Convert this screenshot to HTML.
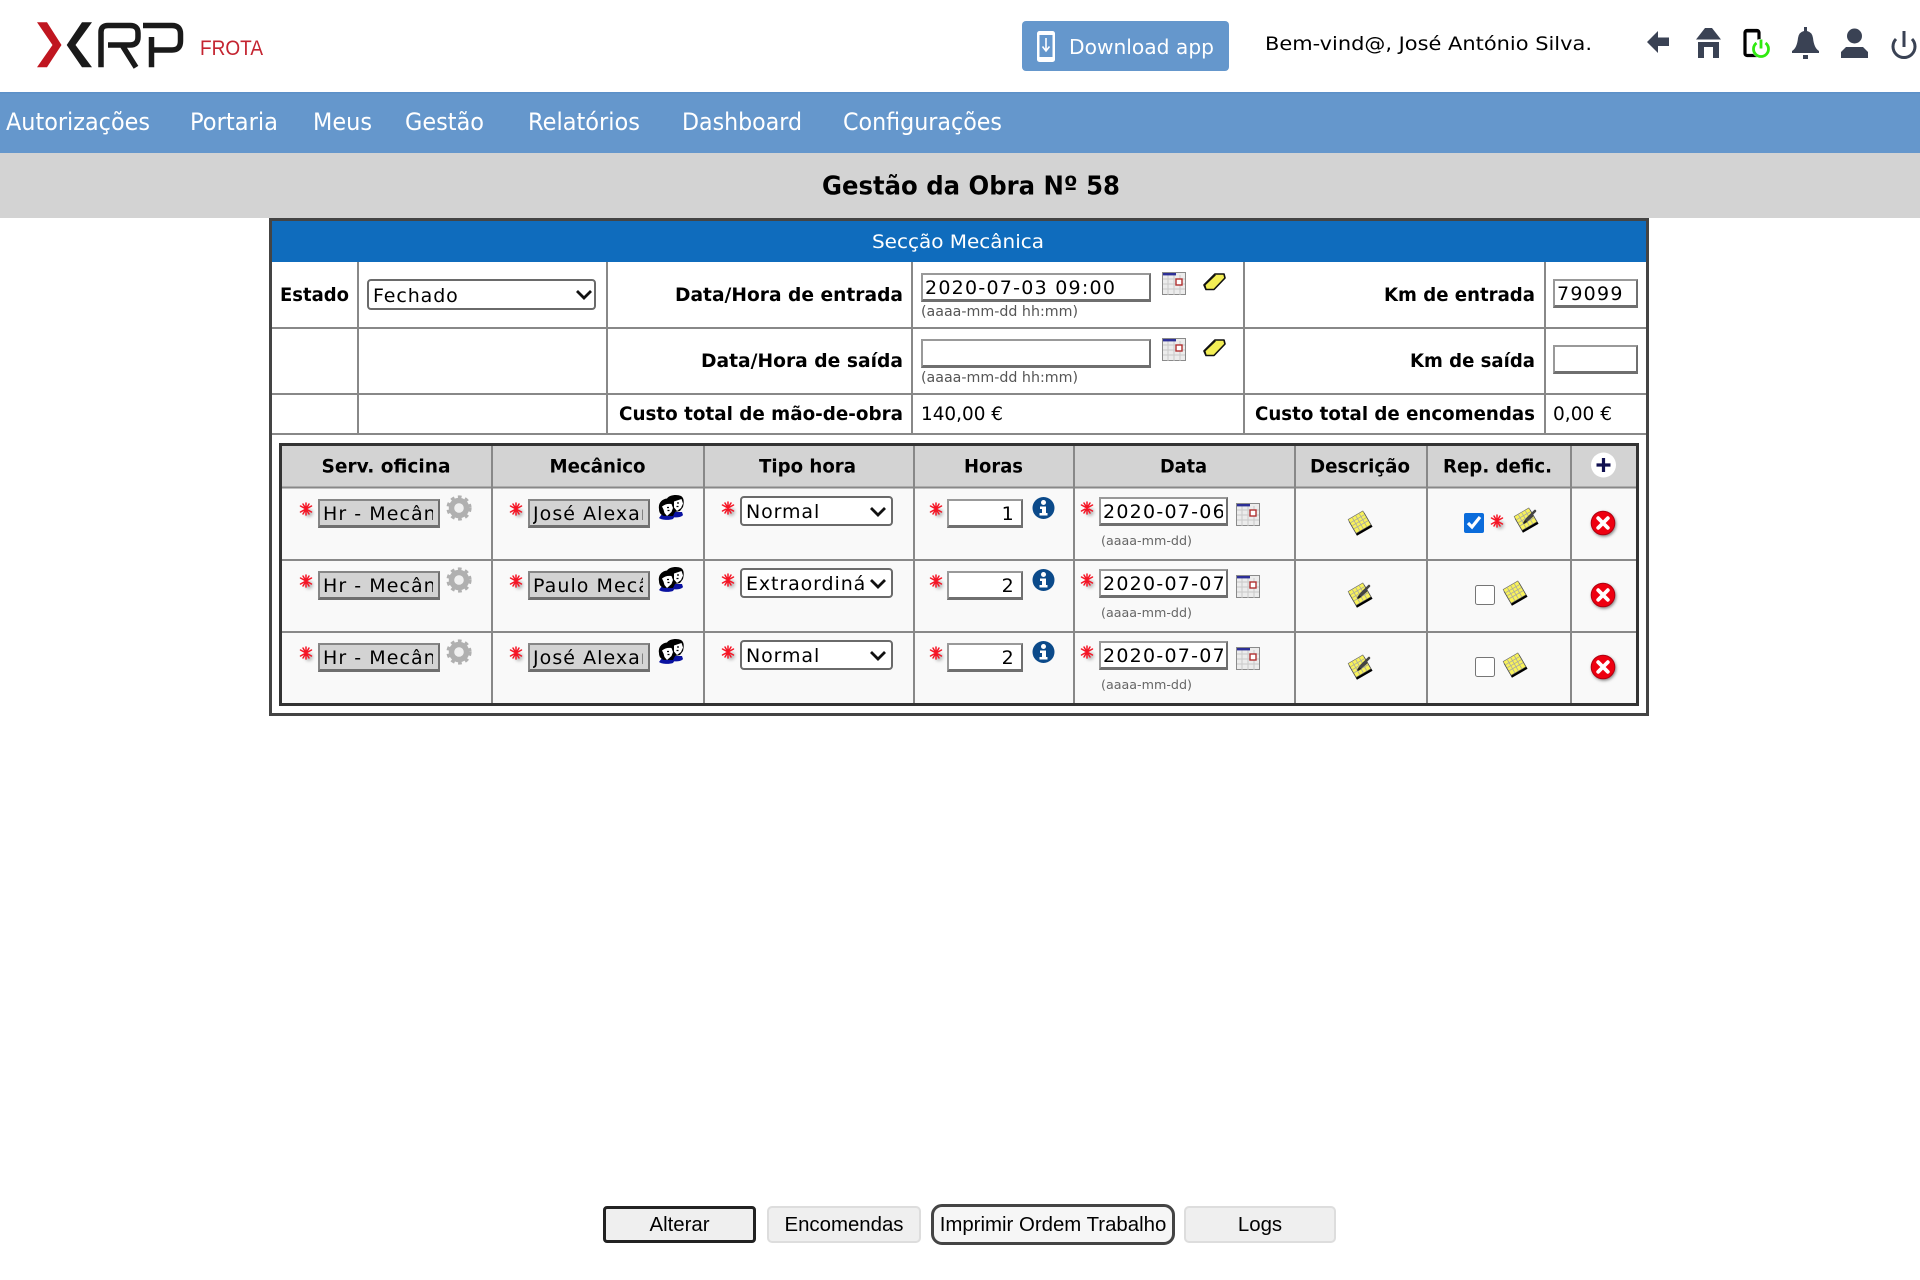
<!DOCTYPE html>
<html lang="pt"><head><meta charset="utf-8"><title>Gestão da Obra Nº 58</title>
<style>
html,body{margin:0;padding:0;background:#fff;width:1920px;height:1280px;overflow:hidden}
#p{position:relative;width:1920px;height:1280px;filter:blur(.35px);font-family:"DejaVu Sans","Liberation Sans",sans-serif}
svg.bg{position:absolute;left:0;top:0}
svg.top{position:absolute;left:0;top:0;pointer-events:none}
svg text{font-family:"DejaVu Sans","Liberation Sans",sans-serif}
.i{position:absolute;box-sizing:border-box;border:2px solid;border-color:#999 #6f6f6f #6f6f6f #999;border-bottom-width:3px;background:#fff;font:19px "DejaVu Sans",sans-serif;letter-spacing:1.25px;color:#000;padding:2px 3px 0 2px;margin:0;outline:none;border-radius:0}
.g{background:#d3d3d3;border-color:#868686 #6f6f6f #6f6f6f #868686;letter-spacing:1.05px;padding:2px 5px 0 3px}
.r{text-align:right;padding-right:6px}
.s{position:absolute}
.s select{appearance:none;-webkit-appearance:none;display:block;box-sizing:border-box;font:19px "DejaVu Sans",sans-serif;letter-spacing:.9px;background:#fff;color:#000;border:2px solid #6a6a6a;border-radius:4px;margin:0;padding:2px 27px 0 4px;outline:none}
.c{position:absolute;margin:0;width:20px;height:20px;accent-color:#0b6cdb}
button{position:absolute;box-sizing:border-box;font:20.4px "Liberation Sans",Arial,sans-serif;color:#000;background:#efefef;border:2px solid #ddd;border-radius:5px;padding:2px 0 0;margin:0;outline:none}
</style></head><body><div id="p">
<svg class="bg" width="1920" height="1280" viewBox="0 0 1920 1280">
<defs>
<filter id="b" x="-50%" y="-50%" width="200%" height="200%"><feGaussianBlur stdDeviation="1.6"/></filter>
<symbol id="star" overflow="visible" viewBox="-10 -10 20 20" width="20" height="20">
<circle cx="3" cy="4" r="4" fill="#bbb" filter="url(#b)"/>
<g stroke="#f51525" stroke-width="1.500" stroke-linecap="round"><path d="M0-6V6M-5.500-3L5.500 3M-5.500 3L5.500-3M-3-5L3 5M-3 5L3-5"/></g></symbol>
<symbol id="gear" overflow="visible" viewBox="-13 -13 26 26" width="26" height="26">
<circle r="7.500" fill="none" stroke="#b0b0b0" stroke-width="5.500"/>
<circle r="10.700" fill="none" stroke="#b0b0b0" stroke-width="3.800" stroke-dasharray="3.600 3.400"/>
<circle r="4.400" fill="#f0f0f0"/></symbol>
<symbol id="grp" overflow="visible" viewBox="0 0 26 26" width="26" height="26">
<path d="M1 23C3 25 11 25.500 15 24L17 21 4 19Z" fill="#0a12a0"/><path d="M12 21C14 23 23 23 25 20L24 17 13 17Z" fill="#0a12a0"/>
<path d="M1 14C0 8 4 4 9 3.500 11 0 19-1 23 1 26.500 3 26 8 25 12L22 16 17 17 15 21 6 21C3 20 1 18 1 14Z" fill="#000"/>
<path d="M4 11.500C7 9 10 8.500 13.500 9L15 13 13.500 17 9 21 6.500 18 5.500 14.500Z" fill="#fff"/>
<path d="M16 6.500L23.500 4 25 8.500 23 13 19 16 16 12.500Z" fill="#fff"/>
<path d="M9 12.500h2M9.500 15.500h2M19 8h2M18.500 11.500h2" stroke="#000" stroke-width="1.300"/></symbol>
<symbol id="note" overflow="visible" viewBox="-13 -13 26 26" width="26" height="26">
<g transform="rotate(-30)">
<rect x="-9" y="-7" width="18" height="16.500" fill="#000"/>
<rect x="-8.500" y="-9" width="17" height="16" fill="#f8f25a" stroke="#666" stroke-width=".6"/>
<path d="M-8-5H8M-8-1.500H8M-8 2H8M-4-9V7M0-9V7M4-9V7" stroke="#a9a9a0" stroke-width=".8"/></g></symbol>
<symbol id="pen" overflow="visible" viewBox="-13 -13 26 26" width="26" height="26">
<path d="M-1.500 2.500L2-2 9-9M0 1L6-4" stroke="#444" stroke-width="2.600" fill="none" stroke-linecap="round"/><path d="M-3 4L-1 0 1.500 2Z" fill="#222"/></symbol>
<symbol id="cal" overflow="visible" viewBox="0 0 24 23" width="24" height="23">
<rect x=".5" y=".5" width="23" height="22" fill="#ececec" stroke="#8a8a8a"/>
<path d="M1 7H23M1 12H23M1 17H23M6 3V23M12 3V23M18 3V23" stroke="#c9c9c9" stroke-width="1"/>
<rect x="1" y="1" width="13" height="2.400" fill="#2c2f96"/>
<rect x="14" y="7" width="6" height="6" fill="#fff" stroke="#b03030" stroke-width="1.400"/></symbol>
<symbol id="era" overflow="visible" viewBox="0 0 23 18" width="23" height="18">
<path d="M12 1H21L22 5 11 16.500H3L1 12Z" fill="#f3ee55" stroke="#111" stroke-width="1.600" stroke-linejoin="round"/><path d="M3 16L2 12 12.500 2" fill="none" stroke="#111" stroke-width="1"/></symbol>
<symbol id="info" overflow="visible" viewBox="-12 -12 24 24" width="24" height="24">
<circle r="11" fill="#0b4a8a"/><circle cy="-5.500" r="2.500" fill="#fff"/><path d="M-3.500-1.500H2.500V5H4V7.500H-4V5H-1.500V1H-3.500Z" fill="#fff"/></symbol>
<symbol id="x" overflow="visible" viewBox="-14 -14 28 28" width="28" height="28">
<circle cx="1" cy="1.500" r="12" fill="#777" filter="url(#b)"/><circle r="11.800" fill="#ee0010" stroke="#b00010" stroke-width="1"/><path d="M-4.800-4.800L4.800 4.800M-4.800 4.800L4.800-4.800" stroke="#fff" stroke-width="3.800" stroke-linecap="round"/></symbol>
</defs>

<!-- logo -->
<polygon points="37,22.300 47,22.300 61.500,45 47,67.300 37,67.300 52.500,45" fill="#c01620"/>
<polygon points="92,22.300 82,22.300 66.700,45 82,67.300 92,67.300 75.500,45" fill="#1a1a1a"/>
<path d="M101 67.300V32Q101 25.500 108 25.500H130Q138 25.500 138 33V37Q138 45 130 45H108M122 45L136 67.300" fill="none" stroke="#1a1a1a" stroke-width="5.500"/>
<path d="M143 25.500H172Q180.500 25.500 180.500 34V41Q180.500 50 172 50H154M151.500 67.300V37" fill="none" stroke="#1a1a1a" stroke-width="5.500"/>
<text x="200" y="55" font-size="21" fill="#c42430" textLength="63" lengthAdjust="spacingAndGlyphs" style="font-family:'Liberation Sans',sans-serif">FROTA</text>

<!-- download -->
<rect x="1022" y="21" width="207" height="50" rx="4" fill="#6597cc"/>
<rect x="1037" y="31" width="18" height="31" rx="2.500" fill="#fff"/>
<rect x="1039.500" y="35" width="13" height="22" fill="#6597cc"/>
<path d="M1046 38V50M1042.500 46.500L1046 51 1049.500 46.500" fill="none" stroke="#fff" stroke-width="1.600"/>
<text x="1069" y="54" font-size="20" fill="#fff" textLength="145" lengthAdjust="spacingAndGlyphs">Download app</text>
<text x="1265" y="50" font-size="19" fill="#000" textLength="327" lengthAdjust="spacingAndGlyphs">Bem-vind@, José António Silva.</text>

<!-- top icons -->
<g fill="#3a4254">
<path d="M1647 42L1658 31V37.500H1669V46H1658V53Z"/>
<path d="M1705 28H1712L1721 39.500H1696ZM1698 42H1719V58H1713V47H1704V58H1698Z"/>
<path d="M1792 51Q1797 48 1798 38 1799 32 1804 31V27H1807V31Q1812 32 1813 38 1814 48 1819 51V53H1792ZM1803 55H1808V59H1803Z"/>
<circle cx="1854.500" cy="36" r="7.500"/><path d="M1846 47H1863L1868 52V58H1841V52Z"/>
</g>
<rect x="1745" y="30.500" width="14" height="25" rx="2" fill="#fff" stroke="#000" stroke-width="3.200"/>
<rect x="1746" y="29" width="12" height="3.500" fill="#000"/>
<circle cx="1761" cy="48.500" r="9.500" fill="#fff"/>
<g fill="none" stroke="#30ea10" stroke-width="2.800"><path d="M1756.500 43A7.500 7.500 0 1 0 1765.500 43"/><path d="M1761 39.500V48.500"/></g>
<g fill="none" stroke="#3a4254" stroke-width="3"><path d="M1896 39A11 11 0 1 0 1912 39"/><path d="M1904 31V47"/></g>

<!-- bars -->
<rect x="0" y="92" width="1920" height="61" fill="#6597cc"/><rect x="0" y="92" width="1920" height="1.500" fill="#5c90c8"/>
<rect x="0" y="153" width="1920" height="65" fill="#d3d3d3"/>
<g font-size="24" fill="#fff">
<text x="6" y="130" textLength="144" lengthAdjust="spacingAndGlyphs">Autorizações</text>
<text x="190" y="130" textLength="88" lengthAdjust="spacingAndGlyphs">Portaria</text>
<text x="313" y="130" textLength="59" lengthAdjust="spacingAndGlyphs">Meus</text>
<text x="405" y="130" textLength="79" lengthAdjust="spacingAndGlyphs">Gestão</text>
<text x="528" y="130" textLength="112" lengthAdjust="spacingAndGlyphs">Relatórios</text>
<text x="682" y="130" textLength="120" lengthAdjust="spacingAndGlyphs">Dashboard</text>
<text x="843" y="130" textLength="159" lengthAdjust="spacingAndGlyphs">Configurações</text>
</g>
<text x="822" y="194.500" font-size="26" font-weight="bold" fill="#000" textLength="298" lengthAdjust="spacingAndGlyphs">Gestão da Obra Nº 58</text>

<!-- outer table -->
<rect x="270.500" y="219.500" width="1377" height="495" fill="#fff" stroke="#444" stroke-width="3"/>
<rect x="272" y="221" width="1374" height="41" fill="#0f6cbd"/>
<text x="872" y="248" font-size="19" fill="#fff" textLength="172" lengthAdjust="spacingAndGlyphs">Secção Mecânica</text>
<g stroke="#888" stroke-width="2" fill="none">
<path d="M272 328H1646M272 394H1646M272 434H1646"/>
<path d="M358 262V434M607 262V434M912 262V434M1244 262V434M1545 262V434"/>
</g>
<g font-size="19" font-weight="bold" fill="#000">
<text x="280" y="301" textLength="69" lengthAdjust="spacingAndGlyphs">Estado</text>
<text x="675" y="301" textLength="228" lengthAdjust="spacingAndGlyphs">Data/Hora de entrada</text>
<text x="701" y="367" textLength="202" lengthAdjust="spacingAndGlyphs">Data/Hora de saída</text>
<text x="619" y="420" textLength="284" lengthAdjust="spacingAndGlyphs">Custo total de mão-de-obra</text>
<text x="1384" y="301" textLength="151" lengthAdjust="spacingAndGlyphs">Km de entrada</text>
<text x="1410" y="367" textLength="125" lengthAdjust="spacingAndGlyphs">Km de saída</text>
<text x="1255" y="420" textLength="280" lengthAdjust="spacingAndGlyphs">Custo total de encomendas</text>
</g>
<g font-size="18.500" fill="#000">
<text x="921" y="420" textLength="82" lengthAdjust="spacingAndGlyphs">140,00 €</text>
<text x="1553" y="420" textLength="59" lengthAdjust="spacingAndGlyphs">0,00 €</text>
</g>
<g font-size="14" fill="#555">
<text x="921" y="316" textLength="157" lengthAdjust="spacingAndGlyphs">(aaaa-mm-dd hh:mm)</text>
<text x="921" y="382" textLength="157" lengthAdjust="spacingAndGlyphs">(aaaa-mm-dd hh:mm)</text>
</g>
<use href="#cal" x="1162" y="272"/><use href="#cal" x="1162" y="338"/>
<use href="#era" x="1203" y="273"/><use href="#era" x="1203" y="339"/>

<!-- inner table -->
<rect x="280.500" y="444.500" width="1357" height="260" fill="#f9f9f9" stroke="#333" stroke-width="3"/>
<rect x="282" y="446" width="1354" height="41" fill="#d3d3d3"/>
<g stroke="#888" stroke-width="2" fill="none">
<path d="M282 487.500H1636M282 560H1636M282 632H1636"/>
<path d="M492 446V703M704 446V703M914 446V703M1074 446V703M1295 446V703M1427 446V703M1571 446V703"/>
</g>
<g font-size="19" font-weight="bold" fill="#000">
<text x="321.500" y="472.500" textLength="129" lengthAdjust="spacingAndGlyphs">Serv. oficina</text>
<text x="549.500" y="472.500" textLength="96" lengthAdjust="spacingAndGlyphs">Mecânico</text>
<text x="759" y="472.500" textLength="97" lengthAdjust="spacingAndGlyphs">Tipo hora</text>
<text x="964" y="472.500" textLength="59" lengthAdjust="spacingAndGlyphs">Horas</text>
<text x="1160" y="472.500" textLength="47" lengthAdjust="spacingAndGlyphs">Data</text>
<text x="1310" y="472.500" textLength="100" lengthAdjust="spacingAndGlyphs">Descrição</text>
<text x="1443" y="472.500" textLength="109" lengthAdjust="spacingAndGlyphs">Rep. defic.</text>
</g>
<circle cx="1603.500" cy="465" r="12.500" fill="#fff"/><path d="M1603.500 458V472M1596.500 465H1610.500" stroke="#101050" stroke-width="3.200"/>

<!-- row icons -->
<g id="row0">
<use href="#star" x="296" y="499"/><use href="#star" x="506" y="499"/><use href="#star" x="718" y="498"/><use href="#star" x="926" y="499"/><use href="#star" x="1077" y="498"/>
<use href="#gear" x="446" y="495"/><use href="#grp" x="658" y="495"/><use href="#info" x="1031.500" y="496"/><use href="#cal" x="1236" y="503"/>
<use href="#note" x="1347" y="510"/>
<use href="#star" x="1487" y="511"/><use href="#note" x="1513" y="507"/><use href="#pen" x="1513" y="507"/>
<use href="#x" x="1589" y="509"/>
</g>
<g id="row1">
<use href="#star" x="296" y="571"/><use href="#star" x="506" y="571"/><use href="#star" x="718" y="570"/><use href="#star" x="926" y="571"/><use href="#star" x="1077" y="570"/>
<use href="#gear" x="446" y="567"/><use href="#grp" x="658" y="567"/><use href="#info" x="1031.500" y="568"/><use href="#cal" x="1236" y="575"/>
<use href="#note" x="1347" y="582"/><use href="#pen" x="1347" y="582"/>
<use href="#note" x="1502" y="580"/>
<use href="#x" x="1589" y="581"/>
</g>
<g id="row2">
<use href="#star" x="296" y="643"/><use href="#star" x="506" y="643"/><use href="#star" x="718" y="642"/><use href="#star" x="926" y="643"/><use href="#star" x="1077" y="642"/>
<use href="#gear" x="446" y="639"/><use href="#grp" x="658" y="639"/><use href="#info" x="1031.500" y="640"/><use href="#cal" x="1236" y="647"/>
<use href="#note" x="1347" y="654"/><use href="#pen" x="1347" y="654"/>
<use href="#note" x="1502" y="652"/>
<use href="#x" x="1589" y="653"/>
</g>
<g font-size="12.500" fill="#666">
<text x="1101" y="545" textLength="91" lengthAdjust="spacingAndGlyphs">(aaaa-mm-dd)</text>
<text x="1101" y="617" textLength="91" lengthAdjust="spacingAndGlyphs">(aaaa-mm-dd)</text>
<text x="1101" y="689" textLength="91" lengthAdjust="spacingAndGlyphs">(aaaa-mm-dd)</text>
</g>
</svg>

<!-- top form -->
<div class="s" style="left:367px;top:279px"><select style="width:229px;height:31px"><option>Fechado</option></select></div>
<input class="i" style="left:921px;top:273px;width:230px;height:29px" value="2020-07-03 09:00">
<input class="i" style="left:921px;top:339px;width:230px;height:29px" value="">
<input class="i" style="left:1553px;top:279px;width:85px;height:29px" value="79099">
<input class="i" style="left:1553px;top:345px;width:85px;height:29px" value="">

<!-- row 0 -->
<input class="i g" style="left:318px;top:499px;width:122px;height:29px" value="Hr - Mecânica">
<input class="i g" style="left:528px;top:499px;width:122px;height:29px" value="José Alexandre">
<div class="s" style="left:740px;top:496px"><select style="width:153px;height:30px"><option>Normal</option></select></div>
<input class="i r" style="left:947px;top:499px;width:76px;height:29px" value="1">
<input class="i" style="left:1099px;top:497px;width:129px;height:29px" value="2020-07-06">
<input class="c" type="checkbox" checked style="left:1464px;top:513px">
<!-- row 1 -->
<input class="i g" style="left:318px;top:571px;width:122px;height:29px" value="Hr - Mecânica">
<input class="i g" style="left:528px;top:571px;width:122px;height:29px" value="Paulo Mecânico">
<div class="s" style="left:740px;top:568px"><select style="width:153px;height:30px"><option>Extraordinária</option></select></div>
<input class="i r" style="left:947px;top:571px;width:76px;height:29px" value="2">
<input class="i" style="left:1099px;top:569px;width:129px;height:29px" value="2020-07-07">
<input class="c" type="checkbox" style="left:1475px;top:585px">
<!-- row 2 -->
<input class="i g" style="left:318px;top:643px;width:122px;height:29px" value="Hr - Mecânica">
<input class="i g" style="left:528px;top:643px;width:122px;height:29px" value="José Alexandre">
<div class="s" style="left:740px;top:640px"><select style="width:153px;height:30px"><option>Normal</option></select></div>
<input class="i r" style="left:947px;top:643px;width:76px;height:29px" value="2">
<input class="i" style="left:1099px;top:641px;width:129px;height:29px" value="2020-07-07">
<input class="c" type="checkbox" style="left:1475px;top:657px">

<svg class="top" width="1920" height="1280" viewBox="0 0 1920 1280">
<g fill="none" stroke="#111" stroke-width="2.800">
<path d="M577 291L584 298 591 291"/>
<path d="M871 508L878 515 885 508"/>
<path d="M871 580L878 587 885 580"/>
<path d="M871 652L878 659 885 652"/>
</g>
</svg>

<!-- bottom buttons -->
<button style="left:603px;top:1206px;width:153px;height:37px;border:3px solid #222;border-radius:4px">Alterar</button>
<button style="left:767px;top:1206px;width:154px;height:37px">Encomendas</button>
<button style="left:931px;top:1204px;width:244px;height:41px;border:3px solid #444;border-radius:11px;background:#f6f6f6">Imprimir Ordem Trabalho</button>
<button style="left:1184px;top:1206px;width:152px;height:37px">Logs</button>
</div></body></html>
